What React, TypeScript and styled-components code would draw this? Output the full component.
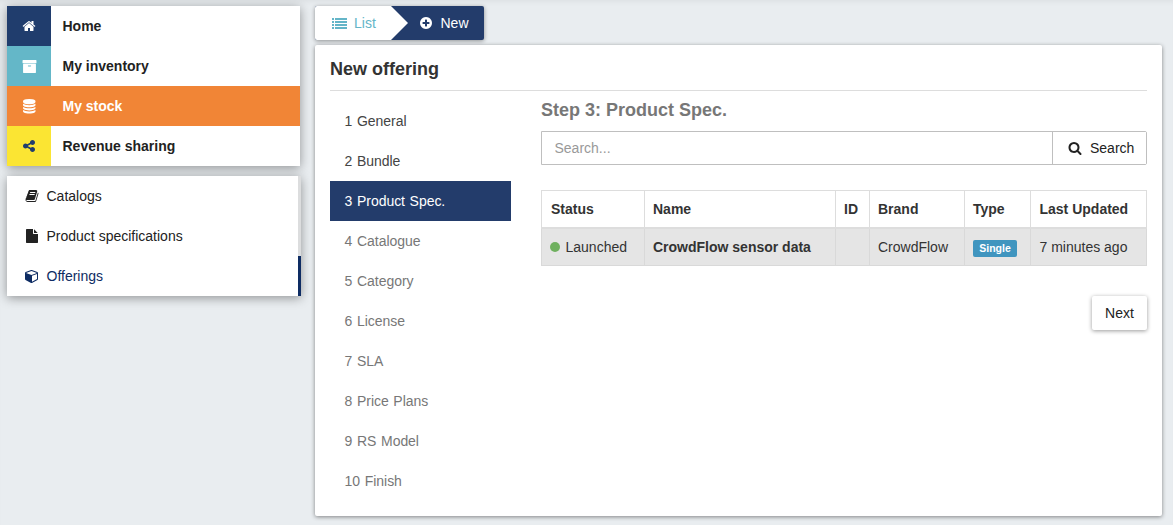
import React from 'react';
import styled, { createGlobalStyle } from 'styled-components';

const GlobalStyle = createGlobalStyle`
  *, *::before, *::after { box-sizing: border-box; }
  body {
    margin: 0;
    background: #e9edf0;
    color: #333;
    font: 14px/20px "Liberation Sans", Arial, sans-serif;
  }
`;

const navy = '#233c6b';

const paths = {
  home: 'M1472 992v480q0 26-19 45t-45 19h-384v-384h-256v384h-384q-26 0-45-19t-19-45v-480q0-1 .5-3t.5-3l575-474 575 474q1 2 1 6zm223-69l-62 74q-8 9-21 11h-3q-13 0-21-7l-692-577-692 577q-12 8-24 7-13-2-21-11l-62-74q-8-10-7-23.5t11-21.5l719-599q32-26 76-26t76 26l244 204v-195q0-14 9-23t23-9h192q14 0 23 9t9 23v408l219 182q10 8 11 21.5t-7 23.5z',
  archive: 'M1088 832q0-26-19-45t-45-19h-256q-26 0-45 19t-19 45 19 45 45 19h256q26 0 45-19t19-45zm576-192v960q0 26-19 45t-45 19h-1408q-26 0-45-19t-19-45v-960q0-26 19-45t45-19h1408q26 0 45 19t19 45zm64-448v256q0 26-19 45t-45 19h-1536q-26 0-45-19t-19-45v-256q0-26 19-45t45-19h1536q26 0 45 19t19 45z',
  database: 'M896 768q237 0 443-43t325-127v170q0 69-103 128t-280 93.5-385 34.5-385-34.5-280-93.5-103-128v-170q119 84 325 127t443 43zm0 768q237 0 443-43t325-127v170q0 69-103 128t-280 93.5-385 34.5-385-34.5-280-93.5-103-128v-170q119 84 325 127t443 43zm0-384q237 0 443-43t325-127v170q0 69-103 128t-280 93.5-385 34.5-385-34.5-280-93.5-103-128v-170q119 84 325 127t443 43zm0-1152q208 0 385 34.5t280 93.5 103 128v128q0 69-103 128t-280 93.5-385 34.5-385-34.5-280-93.5-103-128v-128q0-69 103-128t280-93.5 385-34.5z',
  share: 'M1344 1024q133 0 226.5 93.5t93.5 226.5-93.5 226.5-226.5 93.5-226.5-93.5-93.5-226.5q0-12 2-34l-360-180q-92 86-218 86-133 0-226.5-93.5t-93.5-226.5 93.5-226.5 226.5-93.5q126 0 218 86l360-180q-2-22-2-34 0-133 93.5-226.5t226.5-93.5 226.5 93.5 93.5 226.5-93.5 226.5-226.5 93.5q-126 0-218-86l-360 180q2 22 2 34t-2 34l360 180q92-86 218-86z',
  book: 'M1703 478q40 57 18 129l-275 906q-19 64-76.5 107.5t-122.5 43.5h-923q-77 0-148.5-53.5t-99.5-131.5q-24-67-2-127 0-4 3-27t4-37q1-8-3-21.5t-3-19.5q2-11 8-21t16.5-23.5 16.5-23.5q23-38 45-91.5t30-91.5q3-10 .5-30t-.5-28q3-11 17-28t17-23q21-36 42-92t25-90q1-9-2.5-32t.5-28q4-13 22-30.5t22-22.5q19-26 42.5-84.5t27.5-96.5q1-8-3-25.5t-2-26.5q2-8 9-18t18-23 17-21q8-12 16.5-30.5t15-35 16-36 19.5-32 26.5-23.5 36-11.5 47.5 5.5l-1 3q38-9 51-9h761q74 0 114 56t18 130l-274 906q-36 119-71.5 153.5t-128.5 34.5h-869q-27 0-38 15-11 16-1 43 24 70 144 70h923q29 0 56-15.5t35-41.5l300-987q7-22 5-57 38 15 59 43zm-1064 2q-4 13 2 22.5t20 9.5h608q13 0 25.5-9.5t16.5-22.5l21-64q4-13-2-22.5t-20-9.5h-608q-13 0-25.5 9.5t-16.5 22.5zm-83 256q-4 13 2 22.5t20 9.5h608q13 0 25.5-9.5t16.5-22.5l21-64q4-13-2-22.5t-20-9.5h-608q-13 0-25.5 9.5t-16.5 22.5z',
  file: 'M1152 512v-472q22 14 36 28l408 408q14 14 28 36h-472zm-128 32q0 40 28 68t68 28h544v1056q0 40-28 68t-68 28h-1344q-40 0-68-28t-28-68v-1600q0-40 28-68t68-28h800v544z',
  cube: 'M896 1629l640-349v-636l-640 233v752zm-64-865l698-254-698-254-698 254 698 254zm832-252v768q0 35-18 65t-49 47l-704 384q-28 16-61 16t-61-16l-704-384q-31-17-49-47t-18-65v-768q0-40 23-73t61-47l704-256q22-8 44-8t44 8l704 256q38 14 61 47t23 73z',
  list: 'M0 239h239v239H0zM358 239h1434v239H358zM0 597h239v239H0zM358 597h1434v239H358zM0 956h239v239H0zM358 956h1434v239H358zM0 1314h239v239H0zM358 1314h1434v239H358z',
  plus: 'M1344 960v-128q0-26-19-45t-45-19h-256v-256q0-26-19-45t-45-19h-128q-26 0-45 19t-19 45v256h-256q-26 0-45 19t-19 45v128q0 26 19 45t45 19h256v256q0 26 19 45t45 19h128q26 0 45-19t19-45v-256h256q26 0 45-19t19-45zm320-64q0 209-103 385.5t-279.5 279.5-385.5 103-385.5-103-279.5-279.5-103-385.5 103-385.5 279.5-279.5 385.5-103 385.5 103 279.5 279.5 103 385.5z',
  search: 'M1216 832q0-185-131.5-316.5t-316.5-131.5-316.5 131.5-131.5 316.5 131.5 316.5 316.5 131.5 316.5-131.5 131.5-316.5zm512 832q0 52-38 90t-90 38q-54 0-90-38l-343-342q-179 124-399 124-143 0-273.5-55.5t-225-150-150-225-55.5-273.5 55.5-273.5 150-225 225-150 273.5-55.5 273.5 55.5 225 150 150 225 55.5 273.5q0 220-124 399l343 343q37 37 37 90z',
};

type IconName = keyof typeof paths;

const Glyph = styled.svg<{ $size: number }>`
  display: block;
  flex: none;
  width: ${(p) => p.$size}px;
  height: ${(p) => p.$size}px;
  fill: currentColor;
  overflow: visible;
`;

const Icon = ({ name, size = 14 }: { name: IconName; size?: number }) => (
  <Glyph $size={size} viewBox="0 0 1792 1792" aria-hidden="true">
    <path d={paths[name]} />
  </Glyph>
);

const Page = styled.div`
  display: flex;
  align-items: flex-start;
  height: 525px;
  padding: 6px 11px 0 7px;
  overflow: hidden;
  box-shadow: inset 0 5px 5px -3px rgba(0, 0, 0, 0.05);
`;

const Sidebar = styled.aside`
  display: flex;
  flex-direction: column;
  gap: 10px;
  width: 293px;
  margin-right: 15px;
`;

const MainMenu = styled.nav`
  background: #fff;
  box-shadow: 0 2px 10px rgba(0, 0, 0, 0.38);
`;

const MainItem = styled.a<{ $active?: boolean }>`
  display: flex;
  height: 40px;
  font-weight: bold;
  line-height: 40px;
  color: ${(p) => (p.$active ? '#fff' : '#222')};
  background: ${(p) => (p.$active ? '#f18536' : '#fff')};
`;

const IconTile = styled.span<{ $bg: string; $fg?: string }>`
  display: flex;
  align-items: center;
  justify-content: center;
  width: 44px;
  margin-right: 11.5px;
  background: ${(p) => p.$bg};
  color: ${(p) => p.$fg || '#fff'};
`;

const SubMenu = styled.nav`
  width: 294px;
  background: #fff;
  box-shadow: 0 2px 10px rgba(0, 0, 0, 0.38);
`;

const SubItem = styled.a<{ $active?: boolean }>`
  display: flex;
  align-items: center;
  gap: 7.5px;
  height: 40px;
  padding-left: 18px;
  color: ${(p) => (p.$active ? '#0e2c63' : '#222')};
  border-right: 3px solid ${(p) => (p.$active ? '#0e2c63' : '#dcddde')};
`;

const Main = styled.main`
  display: flex;
  flex: 1;
  flex-direction: column;
  align-items: flex-start;
  gap: 5px;
`;

const Tabs = styled.div`
  display: flex;
  width: 169px;
  height: 34px;
  border-radius: 2px;
  background: ${navy};
  box-shadow: 0 1px 4px rgba(0, 0, 0, 0.4);
`;

const ListTab = styled.a`
  display: flex;
  align-items: center;
  gap: 7px;
  width: 93px;
  padding-left: 17px;
  border-radius: 2px 0 0 2px;
  color: #64b5c8;
  background: #fff;
  clip-path: polygon(0 0, 76px 0, 100% 50%, 76px 100%, 0 100%);
`;

const NewTab = styled.a`
  display: flex;
  align-items: center;
  gap: 7.5px;
  padding-left: 11px;
  color: #fff;
`;

const Panel = styled.section`
  align-self: stretch;
  height: 471px;
  padding: 0 15px;
  background: #fff;
  border-radius: 2px;
  box-shadow: 0 1px 4px rgba(0, 0, 0, 0.45);
`;

const PanelTitle = styled.h1`
  height: 46px;
  margin: 0;
  padding-top: 14px;
  border-bottom: 1px solid #ddd;
  font-size: 18px;
  line-height: 20px;
`;

const PanelBody = styled.div`
  display: flex;
  gap: 30px;
`;

const Steps = styled.ol`
  width: 181px;
  margin: 0;
  padding: 10px 0 0;
  list-style: none;
`;

const Step = styled.li<{ $state: 'done' | 'active' | 'todo' }>`
  height: 40px;
  padding-left: 14.6px;
  line-height: 40px;
  color: ${(p) => ({ done: '#444', active: '#fff', todo: '#777' })[p.$state]};
  background: ${(p) => (p.$state === 'active' ? navy : 'transparent')};
  word-spacing: 0.8px;
  letter-spacing: -0.04px;
`;

const StepContent = styled.div`
  display: flex;
  flex: 1;
  flex-direction: column;
`;

const StepTitle = styled.h2`
  margin: 9px 0 11px;
  font-size: 18px;
  line-height: 20px;
  color: #777;
`;

const SearchBar = styled.div`
  display: flex;
  height: 34px;
  margin-bottom: 25px;
  border: 1px solid #bfbfbf;
  border-radius: 0 2px 2px 0;
`;

const SearchInput = styled.input`
  flex: 1;
  min-width: 0;
  padding: 0 12.5px;
  border: 0;
  outline: 0;
  background: transparent;
  font: inherit;
  &::placeholder { color: #999; opacity: 1; }
`;

const SearchButton = styled.button`
  display: flex;
  align-items: center;
  gap: 8px;
  width: 94px;
  padding: 0 0 0 15px;
  border: 0;
  border-left: 1px solid #bfbfbf;
  background: #fff;
  color: #222;
  font: inherit;
`;

const Table = styled.table`
  width: 606px;
  table-layout: fixed;
  border-collapse: collapse;
`;

const HeadCell = styled.th<{ $width: number }>`
  width: ${(p) => p.$width}px;
  height: 37px;
  padding: 0 0 0 8px;
  border: 1px solid #ddd;
  border-bottom-width: 2px;
  text-align: left;

  &:first-child { padding-left: 9px; }
  &:last-child { padding-left: 8.5px; }
`;

const Cell = styled.td<{ $strong?: boolean }>`
  height: 38px;
  padding: 0 0 0 8px;
  border: 1px solid #d9d9d9;
  background: #e5e5e5;
  font-weight: ${(p) => (p.$strong ? 'bold' : 'normal')};

  &:last-child { padding-left: 8.5px; }
`;

const Status = styled.span`
  display: flex;
  align-items: center;
  gap: 5.5px;
  &::before {
    content: '';
    width: 10px;
    height: 10px;
    border-radius: 50%;
    background: #6fb05f;
  }
`;

const Badge = styled.span`
  display: block;
  width: 44px;
  height: 17px;
  margin-top: 3px;
  border-radius: 2px;
  background: #4095bf;
  color: #fff;
  font-size: 10.5px;
  font-weight: bold;
  line-height: 17px;
  text-align: center;
`;

const NextButton = styled.button`
  align-self: flex-end;
  width: 55px;
  height: 34px;
  margin-top: 30px;
  padding: 0;
  border: 0;
  border-radius: 2px;
  background: #fff;
  box-shadow: 0 1px 4px rgba(0, 0, 0, 0.4);
  color: #222;
  font: inherit;
`;

const steps = ['General', 'Bundle', 'Product Spec.', 'Catalogue', 'Category', 'License', 'SLA', 'Price Plans', 'RS Model', 'Finish'];
const current = 2;

const columns: [string, number][] = [
  ['Status', 103],
  ['Name', 191],
  ['ID', 34],
  ['Brand', 95],
  ['Type', 66],
  ['Last Updated', 116],
];

export default function App() {
  return (
    <Page>
      <GlobalStyle />
      <Sidebar>
        <MainMenu>
          <MainItem><IconTile $bg="#203d6d"><Icon name="home" /></IconTile>Home</MainItem>
          <MainItem><IconTile $bg="#64b7c8"><Icon name="archive" size={15} /></IconTile>My inventory</MainItem>
          <MainItem $active><IconTile $bg="#f18536"><Icon name="database" size={14.5} /></IconTile>My stock</MainItem>
          <MainItem><IconTile $bg="#fbe533" $fg="#203d6d"><Icon name="share" /></IconTile>Revenue sharing</MainItem>
        </MainMenu>
        <SubMenu>
          <SubItem><Icon name="book" />Catalogs</SubItem>
          <SubItem><Icon name="file" />Product specifications</SubItem>
          <SubItem $active><Icon name="cube" />Offerings</SubItem>
        </SubMenu>
      </Sidebar>
      <Main>
        <Tabs>
          <ListTab><Icon name="list" size={15} />List</ListTab>
          <NewTab><Icon name="plus" />New</NewTab>
        </Tabs>
        <Panel>
          <PanelTitle>New offering</PanelTitle>
          <PanelBody>
            <Steps>
              {steps.map((label, i) => (
                <Step key={label} $state={i < current ? 'done' : i === current ? 'active' : 'todo'}>
                  {`${i + 1} ${label}`}
                </Step>
              ))}
            </Steps>
            <StepContent>
              <StepTitle>Step 3: Product Spec.</StepTitle>
              <SearchBar>
                <SearchInput placeholder="Search..." />
                <SearchButton><Icon name="search" />Search</SearchButton>
              </SearchBar>
              <Table>
                <thead>
                  <tr>
                    {columns.map(([label, width]) => (
                      <HeadCell key={label} $width={width}>{label}</HeadCell>
                    ))}
                  </tr>
                </thead>
                <tbody>
                  <tr>
                    <Cell><Status>Launched</Status></Cell>
                    <Cell $strong>CrowdFlow sensor data</Cell>
                    <Cell />
                    <Cell>CrowdFlow</Cell>
                    <Cell><Badge>Single</Badge></Cell>
                    <Cell>7 minutes ago</Cell>
                  </tr>
                </tbody>
              </Table>
              <NextButton>Next</NextButton>
            </StepContent>
          </PanelBody>
        </Panel>
      </Main>
    </Page>
  );
}
